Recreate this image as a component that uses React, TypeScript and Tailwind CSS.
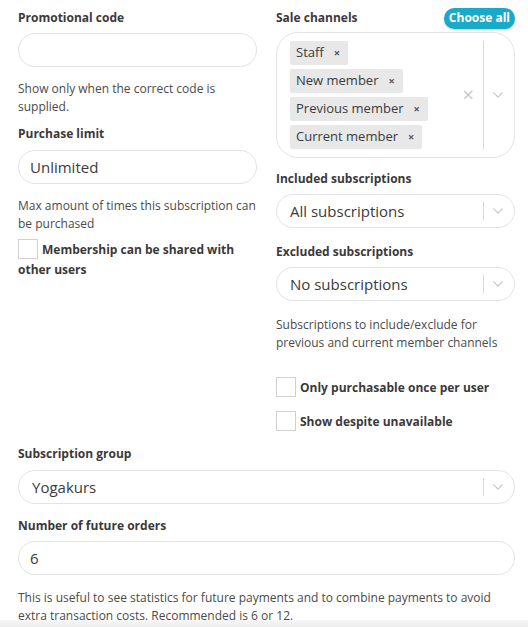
import React from "react";

const font = { fontFamily: '"Open Sans", "Liberation Sans", sans-serif' };

const Label: React.FC<{ children: React.ReactNode }> = ({ children }) => (
  <div className="text-[12px] font-bold text-[#3b3939] leading-[18px]">{children}</div>
);

const Help: React.FC<{ children: React.ReactNode }> = ({ children }) => (
  <p className="text-[12px] text-[#4a4a4a] leading-[18px]">{children}</p>
);

const Chevron = () => (
  <svg width="14" height="14" viewBox="0 0 20 20" className="text-[#c4c4c4]">
    <path d="M4 7l6 6 6-6" fill="none" stroke="currentColor" strokeWidth="1.6" strokeLinecap="round" strokeLinejoin="round" />
  </svg>
);

const TextInput: React.FC<{ value?: string }> = ({ value }) => (
  <div className="h-[34px] rounded-full border border-[#e3e3e3] bg-white flex items-center px-[11px] text-[15px] text-[#3b3b3b]">
    {value}
  </div>
);

const Select: React.FC<{ value: string }> = ({ value }) => (
  <div className="h-[34px] rounded-full border border-[#e3e3e3] bg-white flex items-center pl-[13px] pr-[2px] text-[15px] text-[#3b3b3b]">
    <span className="flex-1">{value}</span>
    <span className="w-px h-[18px] bg-[#d6d6d6]" />
    <span className="w-[28px] flex justify-center">
      <Chevron />
    </span>
  </div>
);

const Checkbox: React.FC<{ label: string }> = ({ label }) => (
  <div className="text-[12px] font-bold text-[#3b3939] leading-[20px]">
    <span className="inline-block align-middle w-[20px] h-[20px] border border-[#d0d0d0] bg-white mr-[4px] -mt-[3px]" />
    {label}
  </div>
);

const Chip: React.FC<{ text: string }> = ({ text }) => (
  <div className="inline-flex items-center h-[24px] bg-[#e8e8e8] rounded-[2px] pl-[6px] pr-[8px] text-[13px] text-[#3b3b3b]">
    <span>{text}</span>
    <span className="ml-[10px] text-[11px] font-bold text-[#555]">×</span>
  </div>
);

export default function App() {
  return (
    <div className="w-[528px] h-[627px] bg-white overflow-hidden relative" style={font}>
      <div className="pl-[18px] pr-[13px] pt-[8px]">
        <div className="grid grid-cols-2 gap-x-[19px]">
          {/* left column */}
          <div className="flex flex-col">
            <div className="h-[20px] flex items-center">
              <Label>Promotional code</Label>
            </div>
            <div className="mt-[5px]">
              <TextInput />
            </div>
            <div className="mt-[13px]">
              <Help>Show only when the correct code is supplied.</Help>
            </div>
            <div className="mt-[9px]">
              <Label>Purchase limit</Label>
            </div>
            <div className="mt-[7px]">
              <TextInput value="Unlimited" />
            </div>
            <div className="mt-[13px]">
              <Help>Max amount of times this subscription can be purchased</Help>
            </div>
            <div className="mt-[7px]">
              <Checkbox label="Membership can be shared with other users" />
            </div>
          </div>

          {/* right column */}
          <div className="flex flex-col">
            <div className="h-[20px] flex items-center justify-between">
              <Label>Sale channels</Label>
              <button className="h-[21px] px-[5px] rounded-full bg-[#19a9c9] text-white text-[12px] font-bold leading-none shadow-[0_1px_2px_rgba(0,0,0,0.2)]">
                Choose all
              </button>
            </div>
            <div className="mt-[4px] rounded-[22px] border border-[#e3e3e3] bg-white flex items-stretch py-[8px] pl-[13px] pr-[2px]">
              <div className="flex-1 flex flex-col items-start gap-[4px]">
                <Chip text="Staff" />
                <Chip text="New member" />
                <Chip text="Previous member" />
                <Chip text="Current member" />
              </div>
              <div className="flex items-center pr-[9px]">
                <span className="text-[20px] text-[#c6c6c6] leading-none">×</span>
              </div>
              <span className="w-px bg-[#d6d6d6]" />
              <div className="w-[28px] flex items-center justify-center">
                <Chevron />
              </div>
            </div>
            <div className="mt-[12px]">
              <Label>Included subscriptions</Label>
            </div>
            <div className="mt-[6px]">
              <Select value="All subscriptions" />
            </div>
            <div className="mt-[15px]">
              <Label>Excluded subscriptions</Label>
            </div>
            <div className="mt-[6px]">
              <Select value="No subscriptions" />
            </div>
            <div className="mt-[15px]">
              <Help>Subscriptions to include/exclude for previous and current member channels</Help>
            </div>
            <div className="mt-[26px]">
              <Checkbox label="Only purchasable once per user" />
            </div>
            <div className="mt-[14px]">
              <Checkbox label="Show despite unavailable" />
            </div>
          </div>
        </div>

        {/* full width */}
        <div className="mt-[13px]">
          <Label>Subscription group</Label>
        </div>
        <div className="mt-[7px]">
          <Select value="Yogakurs" />
        </div>
        <div className="mt-[13px]">
          <Label>Number of future orders</Label>
        </div>
        <div className="mt-[6px]">
          <TextInput value="6" />
        </div>
        <div className="mt-[14px]">
          <Help>
            This is useful to see statistics for future payments and to combine payments to avoid extra transaction costs. Recommended is 6 or 12.
          </Help>
        </div>
      </div>
      <div className="absolute left-0 right-0 bottom-0 h-[7px] bg-gradient-to-b from-[#f7f7f7] to-[#ececec]" />
    </div>
  );
}
